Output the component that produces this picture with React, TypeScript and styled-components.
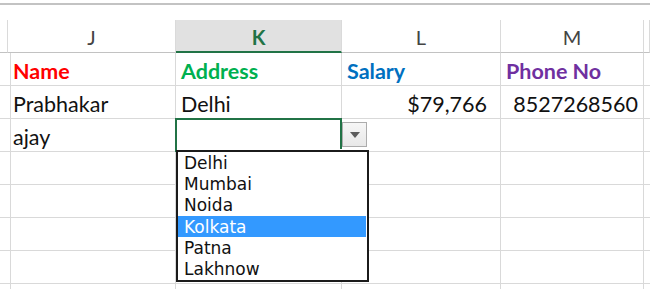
import React from 'react';
import styled, { createGlobalStyle } from 'styled-components';

const GlobalStyle = createGlobalStyle`
  html, body { margin: 0; padding: 0; background: #fff; }
  body { font-family: Lato, 'Liberation Sans', sans-serif; overflow: hidden; }
  * { box-sizing: border-box; }
`;

const Sheet = styled.div`
  width: 650px;
  height: 289px;
  overflow: hidden;
  background: #fff;
`;

const FormulaEdge = styled.div`
  height: 5px;
  border-bottom: 2px solid #c3c3c3;
  margin-bottom: 15px;
`;

const Grid = styled.div`
  display: grid;
  grid-template-columns: 8px 168px 166px 159px 143px 6px;
  grid-auto-rows: 33px;
`;

const ColHead = styled.div<{ $active?: boolean }>`
  display: flex;
  align-items: center;
  justify-content: center;
  padding-top: 2px;
  border-right: 1px solid #dadada;
  border-bottom: ${({ $active }) => ($active ? '2px solid #217346' : '1px solid #c2c2c2')};
  background: ${({ $active }) => ($active ? '#e1e1e1' : '#fff')};
  color: ${({ $active }) => ($active ? '#217346' : '#444')};
  font-weight: ${({ $active }) => ($active ? 700 : 400)};
  font-size: 20px;
`;

const Cell = styled.div<{ $right?: boolean; $color?: string; $bold?: boolean; $padRight?: number }>`
  position: relative;
  display: flex;
  align-items: flex-end;
  justify-content: ${({ $right }) => ($right ? 'flex-end' : 'flex-start')};
  padding: 0 ${({ $padRight }) => $padRight ?? 5}px 2px 5px;
  border-right: 1px solid #d9d9d9;
  border-bottom: 1px solid #d9d9d9;
  color: ${({ $color }) => $color ?? '#111'};
  font-weight: ${({ $bold }) => ($bold ? 700 : 400)};
  font-size: 21.5px;
  line-height: 24px;
  white-space: nowrap;
`;

const ActiveCell = styled(Cell)`
  z-index: 2;
  &::after {
    content: '';
    position: absolute;
    inset: -1px;
    border: 2px solid #217346;
    pointer-events: none;
  }
`;

const FillHandle = styled.span`
  position: absolute;
  right: -4px;
  bottom: -4px;
  width: 6px;
  height: 6px;
  background: #217346;
  border: 1px solid #fff;
  z-index: 1;
`;

const DropButton = styled.div`
  position: absolute;
  left: calc(100% + 1px);
  top: 3px;
  width: 25px;
  height: 25px;
  display: flex;
  align-items: center;
  justify-content: center;
  border: 1px solid #acacac;
  background: linear-gradient(#f6f6f6, #e8e8e8);
`;

const DropList = styled.ul`
  position: absolute;
  left: 0;
  top: calc(100% - 1px);
  width: 193px;
  margin: 0;
  padding: 0 1px 0 0;
  list-style: none;
  background: #fff;
  border: 2px solid #1b1b1b;
  z-index: 3;
  font-family: 'DejaVu Sans', 'Liberation Sans', sans-serif;
`;

const Option = styled.li<{ $selected?: boolean }>`
  display: flex;
  align-items: center;
  height: 21.33px;
  padding-left: 6px;
  font-size: 17px;
  line-height: 20px;
  color: ${({ $selected }) => ($selected ? '#fff' : '#111')};
  background: ${({ $selected }) => ($selected ? '#3399ff' : 'transparent')};
`;

type CellData = {
  text?: string;
  color?: string;
  bold?: boolean;
  right?: boolean;
  padRight?: number;
  active?: boolean;
};

const columns = ['J', 'K', 'L', 'M'];

const rows: CellData[][] = [
  [
    { text: 'Name', color: '#ff0000', bold: true },
    { text: 'Address', color: '#00b050', bold: true },
    { text: 'Salary', color: '#0070c0', bold: true },
    { text: 'Phone No', color: '#7030a0', bold: true },
  ],
  [
    { text: 'Prabhakar' },
    { text: 'Delhi' },
    { text: '$79,766', right: true, padRight: 13 },
    { text: '8527268560', right: true },
  ],
  [{ text: 'ajay' }, { active: true }, {}, {}],
  [{}, {}, {}, {}],
  [{}, {}, {}, {}],
  [{}, {}, {}, {}],
  [{}, {}, {}, {}],
  [{}, {}, {}, {}],
];

const cities = ['Delhi', 'Mumbai', 'Noida', 'Kolkata', 'Patna', 'Lakhnow'];

const Caret = () => (
  <svg width="10" height="6" viewBox="0 0 10 6">
    <polygon points="0,0 10,0 5,6" fill="#5c5c5c" />
  </svg>
);

export default function App() {
  return (
    <Sheet>
      <GlobalStyle />
      <FormulaEdge />
      <Grid>
        <ColHead />
        {columns.map((c) => (
          <ColHead key={c} $active={c === 'K'}>
            {c}
          </ColHead>
        ))}
        <ColHead />
        {rows.map((row, r) => (
          <React.Fragment key={r}>
            <Cell />
            {row.map((cell, i) =>
              cell.active ? (
                <ActiveCell key={i}>
                  <FillHandle />
                  <DropButton>
                    <Caret />
                  </DropButton>
                  <DropList>
                    {cities.map((city) => (
                      <Option key={city} $selected={city === 'Kolkata'}>
                        {city}
                      </Option>
                    ))}
                  </DropList>
                </ActiveCell>
              ) : (
                <Cell
                  key={i}
                  $color={cell.color}
                  $bold={cell.bold}
                  $right={cell.right}
                  $padRight={cell.padRight}
                >
                  {cell.text}
                </Cell>
              )
            )}
            <Cell />
          </React.Fragment>
        ))}
      </Grid>
    </Sheet>
  );
}
